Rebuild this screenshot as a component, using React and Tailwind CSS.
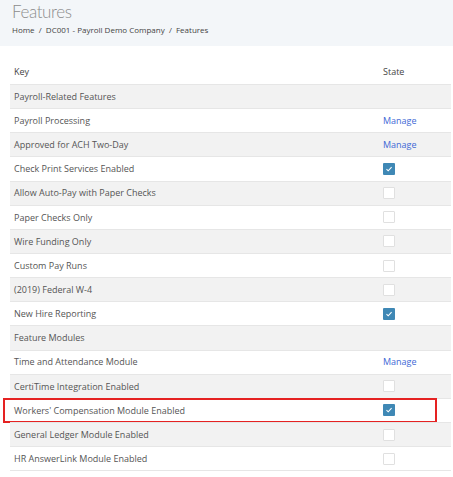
import React from 'react';

const rows = [
  { key: 'Payroll-Related Features', type: 'group' },
  { key: 'Payroll Processing', type: 'link' },
  { key: 'Approved for ACH Two-Day', type: 'link' },
  { key: 'Check Print Services Enabled', type: 'check', checked: true },
  { key: 'Allow Auto-Pay with Paper Checks', type: 'check' },
  { key: 'Paper Checks Only', type: 'check' },
  { key: 'Wire Funding Only', type: 'check' },
  { key: 'Custom Pay Runs', type: 'check' },
  { key: '(2019) Federal W-4', type: 'check' },
  { key: 'New Hire Reporting', type: 'check', checked: true },
  { key: 'Feature Modules', type: 'group' },
  { key: 'Time and Attendance Module', type: 'link' },
  { key: 'CertiTime Integration Enabled', type: 'check' },
  { key: "Workers' Compensation Module Enabled", type: 'check', checked: true, highlight: true },
  { key: 'General Ledger Module Enabled', type: 'check' },
  { key: 'HR AnswerLink Module Enabled', type: 'check' },
];

const Checkbox = ({ checked }) =>
  checked ? (
    <span className="flex h-[12px] w-[12px] items-center justify-center rounded-[1px] bg-[#3f88b5]">
      <svg width="8" height="8" viewBox="0 0 8 8" fill="none">
        <path d="M1.5 4.2 L3.2 5.8 L6.6 2.2" stroke="#ffffff" strokeWidth="1.1" />
      </svg>
    </span>
  ) : (
    <span className="block h-[12px] w-[12px] rounded-[1px] border border-[#e0e0e0] bg-white" />
  );

export default function App() {
  return (
    <div className="min-h-[477px] w-[453px] bg-white text-[#555] [font-family:'Open_Sans',sans-serif]">
      <div className="h-[46px] bg-[#f3f6f9] pl-[12px] pt-[1px]">
        <h1 className="text-[17px] font-light leading-[22px] tracking-[-0.4px] text-[#8c8c8c] [font-family:Lato,sans-serif]">
          Features
        </h1>
        <div className="mt-[1px] text-[8px] leading-[12px] text-[#444]">
          Home&nbsp; /&nbsp; DC001 - Payroll Demo Company&nbsp; /&nbsp; Features
        </div>
      </div>

      <div className="ml-[10px] mt-[14px] w-[441px] text-[9px]">
        <div className="grid h-[24px] grid-cols-[1fr_72px] items-center">
          <span className="pl-[4px] text-[#444]">Key</span>
          <span className="pl-[4px] text-[#444]">State</span>
        </div>
        {rows.map((r, i) => (
          <div
            key={r.key}
            className={`relative grid h-[24.15px] grid-cols-[1fr_72px] items-center border-t border-[#e6e6e6] ${
              i % 2 === 0 ? 'bg-[#f2f2f2]' : 'bg-white'
            }`}
          >
            <span className="pl-[4px]">{r.key}</span>
            <span className="flex pl-[4px]">
              {r.type === 'link' && <a className="text-[#4169d6]">Manage</a>}
              {r.type === 'check' && <Checkbox checked={r.checked} />}
            </span>
            {r.highlight && (
              <div className="pointer-events-none absolute -left-[7px] right-[14px] -top-[1px] h-[25px] border-2 border-[#e52222]" />
            )}
          </div>
        ))}
        <div className="border-t border-[#e6e6e6]" />
      </div>
    </div>
  );
}
